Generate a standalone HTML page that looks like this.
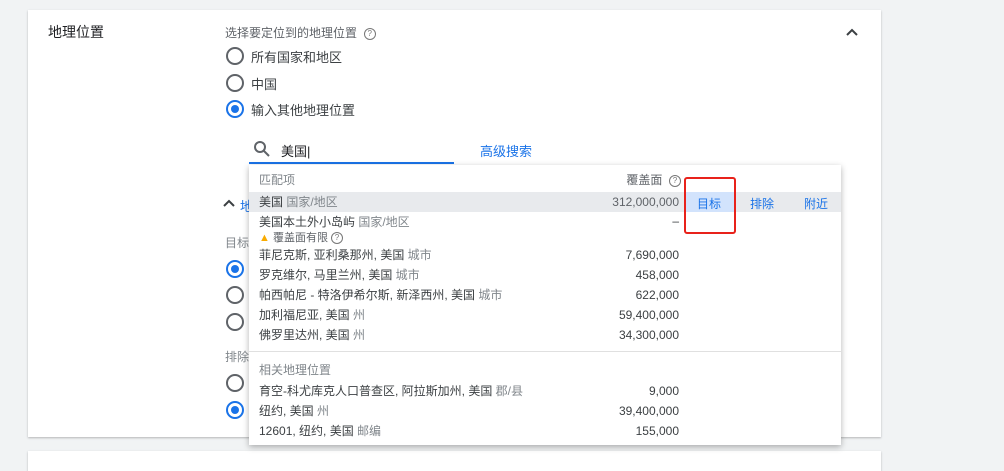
<!DOCTYPE html>
<html><head><meta charset="utf-8"><style>
body{margin:0;width:1004px;height:459px;background:#f1f3f4;font-family:"Liberation Sans","Noto Sans CJK SC",sans-serif;position:relative;overflow:hidden;color:#3c4043}
.card{position:absolute;left:28px;top:10px;width:853px;height:427px;background:#fff;box-shadow:0 1px 2px rgba(0,0,0,.25)}
.card2{position:absolute;left:28px;top:451px;width:853px;height:20px;background:#fff;box-shadow:0 1px 2px rgba(0,0,0,.25)}
.a{position:absolute;white-space:nowrap}
.r{position:absolute;width:18px;height:18px;border:2px solid #5f6368;border-radius:50%;box-sizing:border-box}
.r.on{border-color:#1a73e8}
.r.on:after{content:"";position:absolute;left:3px;top:3px;width:8px;height:8px;border-radius:50%;background:#1a73e8}
.q{display:inline-block;width:10px;height:10px;border:1px solid #777;border-radius:50%;font-size:8px;line-height:10px;text-align:center;color:#777;vertical-align:1px}
.dd{position:absolute;left:249px;top:165px;width:592px;height:280px;background:#fff;box-shadow:0 2px 6px rgba(0,0,0,.3);font-size:12px}
.dd .a{line-height:16px}
.g{color:#80868b}
.n{right:162px;text-align:right}
.bl{color:#1a73e8}
</style></head><body>
<div class="card"></div><div class="card2"></div>
<div class="a" style="left:48px;top:22px;font-size:14px;color:#202124">地理位置</div>
<div class="a" style="left:225px;top:24px;font-size:12px;color:#5f6368">选择要定位到的地理位置 &nbsp;<span class="q">?</span></div>
<svg class="a" style="left:845px;top:27px" width="14" height="10"><path d="M2 8L7 3L12 8" stroke="#3c4043" stroke-width="2" fill="none"/></svg>
<div class="r" style="left:226px;top:47px"></div><div class="a" style="left:251px;top:47px;font-size:13px">所有国家和地区</div>
<div class="r" style="left:226px;top:74px"></div><div class="a" style="left:251px;top:74px;font-size:13px">中国</div>
<div class="r on" style="left:226px;top:100px"></div><div class="a" style="left:251px;top:100px;font-size:13px">输入其他地理位置</div>
<svg class="a" style="left:253px;top:140px" width="18" height="18"><circle cx="7" cy="7" r="5" stroke="#5f6368" stroke-width="2" fill="none"/><path d="M11 11L16 16" stroke="#5f6368" stroke-width="2"/></svg>
<div class="a" style="left:281px;top:141px;font-size:13px;color:#202124">美国|</div>
<div class="a" style="left:249px;top:162px;width:205px;height:2px;background:#1a73e8"></div>
<div class="a bl" style="left:480px;top:141px;font-size:13px">高级搜索</div>
<svg class="a" style="left:223px;top:199px" width="12" height="9"><path d="M1 7L6 2L11 7" stroke="#3c4043" stroke-width="2" fill="none"/></svg>
<div class="a bl" style="left:240px;top:196px;font-size:13px">地</div>
<div class="a" style="left:225px;top:234px;font-size:12px;color:#80868b">目标</div>
<div class="r on" style="left:226px;top:260px"></div><div class="r" style="left:226px;top:286px"></div><div class="r" style="left:226px;top:313px"></div>
<div class="a" style="left:225px;top:348px;font-size:12px;color:#80868b">排除</div>
<div class="r" style="left:226px;top:374px"></div><div class="r on" style="left:226px;top:401px"></div>
<div class="dd">
<div class="a g" style="left:10px;top:7px">匹配项</div>
<div class="a" style="right:160px;top:7px;color:#5f6368">覆盖面 &nbsp;<span class="q">?</span></div>
<div class="a" style="left:0;top:27px;width:592px;height:20px;background:#e8eaed"></div>
<div class="a" style="left:435px;top:27px;width:51px;height:20px;background:#d2e3fc"></div>
<div class="a" style="left:10px;top:29px">美国 <span class="g">国家/地区</span></div><div class="a n" style="top:29px;color:#5f6368">312,000,000</div>
<div class="a bl" style="left:448px;top:31px">目标</div><div class="a bl" style="left:501px;top:31px">排除</div><div class="a bl" style="left:555px;top:31px">附近</div>
<div class="a" style="left:10px;top:49px">美国本土外小岛屿 <span class="g">国家/地区</span></div><div class="a n" style="top:48px">–</div>
<div class="a" style="left:10px;top:65px;font-size:11px;color:#5f6368"><span style="color:#f9ab00">▲</span> 覆盖面有限 <span class="q">?</span></div>
<div class="a" style="left:10px;top:82px">菲尼克斯, 亚利桑那州, 美国 <span class="g">城市</span></div><div class="a n" style="top:82px">7,690,000</div>
<div class="a" style="left:10px;top:102px">罗克维尔, 马里兰州, 美国 <span class="g">城市</span></div><div class="a n" style="top:102px">458,000</div>
<div class="a" style="left:10px;top:122px">帕西帕尼 - 特洛伊希尔斯, 新泽西州, 美国 <span class="g">城市</span></div><div class="a n" style="top:122px">622,000</div>
<div class="a" style="left:10px;top:142px">加利福尼亚, 美国 <span class="g">州</span></div><div class="a n" style="top:142px">59,400,000</div>
<div class="a" style="left:10px;top:162px">佛罗里达州, 美国 <span class="g">州</span></div><div class="a n" style="top:162px">34,300,000</div>
<div class="a" style="left:0;top:186px;width:592px;height:1px;background:#e0e0e0"></div>
<div class="a g" style="left:10px;top:197px">相关地理位置</div>
<div class="a" style="left:10px;top:218px">育空-科尤库克人口普查区, 阿拉斯加州, 美国 <span class="g">郡/县</span></div><div class="a n" style="top:218px">9,000</div>
<div class="a" style="left:10px;top:238px">纽约, 美国 <span class="g">州</span></div><div class="a n" style="top:238px">39,400,000</div>
<div class="a" style="left:10px;top:258px">12601, 纽约, 美国 <span class="g">邮编</span></div><div class="a n" style="top:258px">155,000</div>
</div>
<div class="a" style="left:684px;top:177px;width:48px;height:53px;border:2px solid #e8221b;border-radius:3px"></div>
</body></html>
